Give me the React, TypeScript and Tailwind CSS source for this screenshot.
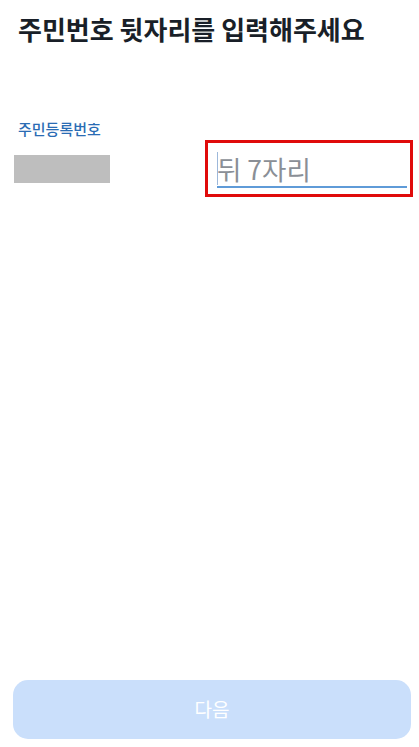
import { useState } from "react";

const App = () => {
    const [value, setValue] = useState<string>("");

    return (
        <div
            className="relative flex h-[747px] w-full flex-col bg-white"
            style={{ fontFamily: '"Noto Sans CJK KR", "Noto Sans", sans-serif' }}
        >
            <h1 className="px-[18px] pt-[12px] text-[26px] font-bold leading-[34px] text-[#191f28]">
                주민번호 뒷자리를 입력해주세요
            </h1>

            <div className="mt-[73px] px-[18px] text-[15px] font-medium leading-[20px] text-[#2a6cb4]">
                주민등록번호
            </div>

            <div className="mt-[1px] flex items-start">
                <div className="ml-[14px] mt-[15px] h-[28px] w-[96px] bg-[#bebebe]" />
                <div className="ml-[95px] h-[57px] w-[208px] border-[3px] border-[#e00b0b] pl-[9px] pr-[3px] pt-[8px]">
                    <div className="relative border-b-2 border-[#5f9bd8]">
                        <span className="absolute left-0 top-[1px] h-[33px] w-px bg-[#9db8da]" />
                        <input
                            value={value}
                            onChange={(e) => setValue(e.target.value)}
                            placeholder="뒤 7자리"
                            className="h-[35px] w-full bg-transparent text-[26.5px] leading-[35px] text-[#333] outline-none placeholder:text-[#8a8f96]"
                        />
                    </div>
                </div>
            </div>

            <div className="flex-1" />

            <div className="pb-[8px] pl-[13px] pr-[8px]">
                <button
                    disabled
                    className="flex h-[59px] w-full items-center justify-center rounded-[15px] bg-[#cadffb] text-[19px] text-white"
                >
                    다음
                </button>
            </div>
        </div>
    );
};

export default App;
